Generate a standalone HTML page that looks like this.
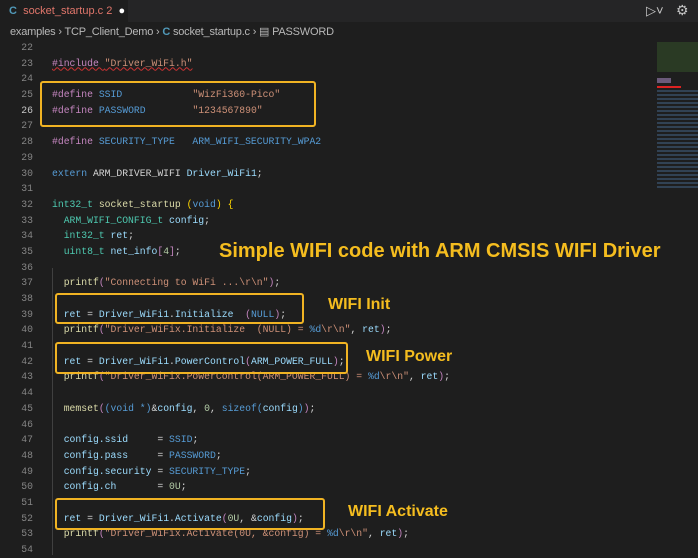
<!DOCTYPE html>
<html><head><meta charset="utf-8"><style>
*{margin:0;padding:0;box-sizing:border-box}
body{width:698px;height:555px;background:#1e1e1e;overflow:hidden;position:relative;font-family:"Liberation Sans",sans-serif}
.tabs{position:absolute;left:0;top:0;width:698px;height:22px;background:#252526}
.tab{position:absolute;left:0;top:0;width:128px;height:22px;background:#1e1e1e;font-size:11px;color:#e0766b;line-height:22px;padding-left:9px}
.crumb{position:absolute;left:0;top:22px;height:20px;width:698px;font-size:11px;color:#b8b8b8;line-height:20px;padding-left:10px;letter-spacing:-0.2px}
.code{position:absolute;left:0;top:40px;font-family:"Liberation Mono",monospace;font-size:9.75px}
.l{height:15.7px;line-height:15.7px;white-space:pre;position:relative}
.n{display:inline-block;width:33px;text-align:right;color:#858585;margin-right:19px}
.p{color:#c586c0}.m{color:#569cd6}.s{color:#ce9178}.t{color:#4ec9b0}.f{color:#dcdcaa}.v{color:#9cdcfe}.d{color:#b5cea8}.w{color:#d4d4d4}.y{color:#ffd700}.k{color:#569cd6}
.box{position:absolute;border:2px solid #f0b323;border-radius:3px}
.ann{position:absolute;color:#f5bd1f;font-weight:bold;white-space:nowrap}
.guide{position:absolute;left:52px;top:268px;width:1px;height:287px;background:#404040}
</style></head><body>
<div class="tabs"><div class="tab"><span style="color:#519aba;font-weight:bold">C</span>&nbsp; socket_startup.c 2 &nbsp;<span style="color:#fff">●</span></div>
<div style="position:absolute;left:646px;top:3px;color:#c5c5c5;font-size:13px">▷˅</div>
<div style="position:absolute;left:676px;top:2px;color:#c5c5c5;font-size:14px">⚙</div></div>
<div class="crumb">examples › TCP_Client_Demo › <span style="color:#519aba;font-weight:bold">C</span> socket_startup.c › ▤ PASSWORD</div>
<div class="guide"></div>
<div class="code">
<div class="l"><span class="n">22</span></div>
<div class="l"><span class="n">23</span><span class="p" style="text-decoration:underline wavy #c33">#include </span><span class="s" style="text-decoration:underline wavy #c33">"Driver_WiFi.h"</span></div>
<div class="l"><span class="n">24</span></div>
<div class="l"><span class="n">25</span><span class="p">#define </span><span class="m">SSID            </span><span class="s">"WizFi360-Pico"</span></div>
<div class="l"><span class="n" style="color:#c6c6c6">26</span><span class="p">#define </span><span class="m">PASSWORD        </span><span class="s">"1234567890"</span></div>
<div class="l"><span class="n">27</span></div>
<div class="l"><span class="n">28</span><span class="p">#define </span><span class="m">SECURITY_TYPE   ARM_WIFI_SECURITY_WPA2</span></div>
<div class="l"><span class="n">29</span></div>
<div class="l"><span class="n">30</span><span class="k">extern</span><span class="w"> ARM_DRIVER_WIFI </span><span class="v">Driver_WiFi1</span><span class="w">;</span></div>
<div class="l"><span class="n">31</span></div>
<div class="l"><span class="n">32</span><span class="t">int32_t</span><span class="w"> </span><span class="f">socket_startup</span><span class="w"> </span><span class="y">(</span><span class="k">void</span><span class="y">)</span><span class="w"> </span><span class="y">{</span></div>
<div class="l"><span class="n">33</span><span class="t">  ARM_WIFI_CONFIG_t</span><span class="v"> config</span><span class="w">;</span></div>
<div class="l"><span class="n">34</span><span class="t">  int32_t</span><span class="v"> ret</span><span class="w">;</span></div>
<div class="l"><span class="n">35</span><span class="t">  uint8_t</span><span class="v"> net_info</span><span class="p">[</span><span class="d">4</span><span class="p">]</span><span class="w">;</span></div>
<div class="l"><span class="n">36</span></div>
<div class="l"><span class="n">37</span><span class="f">  printf</span><span class="p">(</span><span class="s">"Connecting to WiFi ...\r\n"</span><span class="p">)</span><span class="w">;</span></div>
<div class="l"><span class="n">38</span></div>
<div class="l"><span class="n">39</span><span class="v">  ret</span><span class="w"> = </span><span class="v">Driver_WiFi1</span><span class="w">.</span><span class="v">Initialize</span><span class="w">  </span><span class="p">(</span><span class="m">NULL</span><span class="p">)</span><span class="w">;</span></div>
<div class="l"><span class="n">40</span><span class="f">  printf</span><span class="p">(</span><span class="s">"Driver_WiFix.Initialize  (NULL) = </span><span class="m">%d</span><span class="s">\r\n"</span><span class="w">, </span><span class="v">ret</span><span class="p">)</span><span class="w">;</span></div>
<div class="l"><span class="n">41</span></div>
<div class="l"><span class="n">42</span><span class="v">  ret</span><span class="w"> = </span><span class="v">Driver_WiFi1</span><span class="w">.</span><span class="v">PowerControl</span><span class="p">(</span><span class="v">ARM_POWER_FULL</span><span class="p">)</span><span class="w">;</span></div>
<div class="l"><span class="n">43</span><span class="f">  printf</span><span class="p">(</span><span class="s">"Driver_WiFix.PowerControl(ARM_POWER_FULL) = </span><span class="m">%d</span><span class="s">\r\n"</span><span class="w">, </span><span class="v">ret</span><span class="p">)</span><span class="w">;</span></div>
<div class="l"><span class="n">44</span></div>
<div class="l"><span class="n">45</span><span class="f">  memset</span><span class="p">(</span><span class="m">(void *)</span><span class="w">&amp;</span><span class="v">config</span><span class="w">, </span><span class="d">0</span><span class="w">, </span><span class="k">sizeof</span><span class="m">(</span><span class="v">config</span><span class="m">)</span><span class="p">)</span><span class="w">;</span></div>
<div class="l"><span class="n">46</span></div>
<div class="l"><span class="n">47</span><span class="v">  config.ssid     </span><span class="w">= </span><span class="m">SSID</span><span class="w">;</span></div>
<div class="l"><span class="n">48</span><span class="v">  config.pass     </span><span class="w">= </span><span class="m">PASSWORD</span><span class="w">;</span></div>
<div class="l"><span class="n">49</span><span class="v">  config.security </span><span class="w">= </span><span class="m">SECURITY_TYPE</span><span class="w">;</span></div>
<div class="l"><span class="n">50</span><span class="v">  config.ch       </span><span class="w">= </span><span class="d">0U</span><span class="w">;</span></div>
<div class="l"><span class="n">51</span></div>
<div class="l"><span class="n">52</span><span class="v">  ret</span><span class="w"> = </span><span class="v">Driver_WiFi1</span><span class="w">.</span><span class="v">Activate</span><span class="p">(</span><span class="d">0U</span><span class="w">, &amp;</span><span class="v">config</span><span class="p">)</span><span class="w">;</span></div>
<div class="l"><span class="n">53</span><span class="f">  printf</span><span class="p">(</span><span class="s">"Driver_WiFix.Activate(0U, &amp;config) = </span><span class="m">%d</span><span class="s">\r\n"</span><span class="w">, </span><span class="v">ret</span><span class="p">)</span><span class="w">;</span></div>
<div class="l"><span class="n">54</span></div>
</div>
<div class="box" style="left:40px;top:81px;width:276px;height:46px"></div>
<div class="box" style="left:55px;top:293px;width:249px;height:31px"></div>
<div class="box" style="left:55px;top:342px;width:293px;height:32px"></div>
<div class="box" style="left:55px;top:498px;width:270px;height:32px"></div>
<div class="ann" style="left:219px;top:240px;font-size:20px">Simple WIFI code with ARM CMSIS WIFI Driver</div>
<div class="ann" style="left:328px;top:296px;font-size:16px">WIFI Init</div>
<div class="ann" style="left:366px;top:348px;font-size:16px">WIFI Power</div>
<div class="ann" style="left:348px;top:503px;font-size:16px">WIFI Activate</div>
<div style="position:absolute;left:657px;top:42px;width:41px;height:30px;background:#2a3a24"></div>
<div style="position:absolute;left:657px;top:78px;width:14px;height:5px;background:#6b5a7a"></div>
<div style="position:absolute;left:657px;top:86px;width:24px;height:2px;background:#d22"></div>
<div style="position:absolute;left:657px;top:90px;width:41px;height:100px;background:repeating-linear-gradient(#3e5a78 0 2px,#1e1e1e 2px 4px);opacity:.6"></div>
</body></html>
